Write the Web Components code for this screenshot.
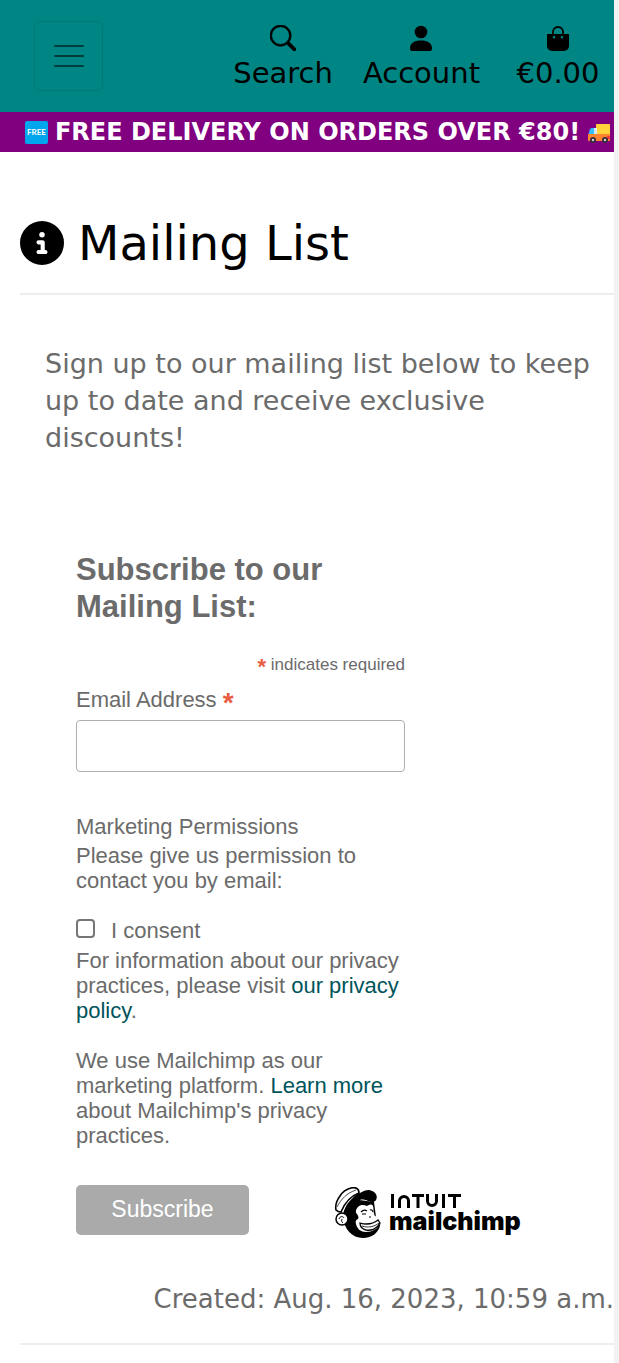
<!DOCTYPE html>
<html lang="en">
<head>
<meta charset="utf-8">
<meta name="viewport" content="width=device-width, initial-scale=1">
<title>Mailing List</title>
<style>
  body { margin: 0; background: #f1f3f2; font-family: "DejaVu Sans", Verdana, sans-serif; color: #6b6b6b; }
</style>
</head>
<body>
<shop-page>
  <shop-header slot="header">
    <nav-item href="#search" label="Search"><svg slot="icon" width="26" height="26" viewBox="0 0 16 16"><path d="M11.742 10.344a6.5 6.5 0 1 0-1.397 1.398h-.001c.03.04.062.078.098.115l3.85 3.85a1 1 0 0 0 1.415-1.414l-3.85-3.85a1.007 1.007 0 0 0-.115-.1zM12 6.5a5.5 5.5 0 1 1-11 0 5.5 5.5 0 0 1 11 0z" stroke="#000" stroke-width=".5"/></svg></nav-item>
    <nav-item href="#account" label="Account"><svg slot="icon" width="26" height="26" viewBox="0 0 26 26"><circle cx="13" cy="7" r="6.300"/><path d="M2 23.500C2 18 6.500 15.500 13 15.500s11 2.500 11 8c0 1.500-.5 2.500-2 2.500H4c-1.500 0-2-1-2-2.500z"/></svg></nav-item>
    <nav-item href="#bag" label="€0.00"><svg slot="icon" width="26" height="26" viewBox="0 0 26 26"><path d="M8 11V7a5 5 0 0 1 10 0v4" fill="none" stroke="#000" stroke-width="1.800"/><path fill-rule="evenodd" d="M2 9h22v12a5 5 0 0 1-5 5H7a5 5 0 0 1-5-5zM7.700 12.300a1.300 1.300 0 1 0 2.600 0 1.300 1.300 0 1 0-2.600 0zM15.700 12.300a1.300 1.300 0 1 0 2.600 0 1.300 1.300 0 1 0-2.600 0z"/></svg></nav-item>
  </shop-header>
  <promo-banner slot="header">FREE DELIVERY ON ORDERS OVER €80!</promo-banner>
  <page-title>Mailing List</page-title>
  <intro-text>Sign up to our mailing list below to keep up to date and receive exclusive discounts!</intro-text>
  <subscribe-form></subscribe-form>
  <created-note>Created: Aug. 16, 2023, 10:59 a.m.</created-note>
</shop-page>

<script>
const define = (name, html) => {
  const template = document.createElement('template');
  template.innerHTML = '<style>:host{display:block;box-sizing:border-box}*{box-sizing:border-box}</style>' + html;
  customElements.define(name, class extends HTMLElement {
    constructor() {
      super();
      this.attachShadow({ mode: 'open' }).append(template.content.cloneNode(true));
    }
    connectedCallback() {
      const link = this.shadowRoot.querySelector('[data-link]');
      if (link) {
        link.href = this.getAttribute('href');
        link.querySelector('span').textContent = this.getAttribute('label');
      }
    }
  });
};

define('shop-page', `
<style>
  :host { margin-right: 5px; background: #fff; overflow: hidden; min-height: 100vh; }
  main { padding: 64px 0 17px 20px; }
</style>
<slot name="header"></slot>
<main><slot></slot></main>`);

define('shop-header', `
<style>
  :host { background: #008585; height: 112px; padding: 21px 8px 0 34px; display: flex; justify-content: space-between; align-items: flex-start; }
  button { width: 69px; height: 70px; border: 1px solid #007878; border-radius: 6px; background: none; padding: 0; display: grid; place-items: center; }
  nav { display: flex; gap: 30px; padding-top: 4px; }
</style>
<button type="button" aria-label="Menu"><svg width="30" height="24" viewBox="0 0 30 24" stroke="#003c3c" stroke-width="2" stroke-linecap="round"><path d="M1 2h28M1 12h28M1 22h28"/></svg></button>
<nav><slot></slot></nav>`);

define('nav-item', `
<style>
  :host { min-width: 96px; }
  a { display: flex; flex-direction: column; align-items: center; gap: 4px; color: #000; text-decoration: none; font-size: 29px; line-height: 36px; }
  ::slotted(svg) { display: block; }
</style>
<a data-link><slot name="icon"></slot><span></span></a>`);

define('promo-banner', `
<style>
  :host { display: flex; align-items: center; justify-content: space-between; height: 40px; padding: 0 3px 0 25px; background: #800080; color: #fff; font-size: 24px; line-height: 40px; font-weight: bold; white-space: nowrap; }
  svg { flex: none; }
</style>
<svg width="23" height="23" viewBox="0 0 23 23" role="img" aria-label="Free"><rect width="23" height="23" rx="2" fill="#00a6ed"/><text x="11.500" y="14" text-anchor="middle" font-family="Lato, sans-serif" font-size="8" font-weight="bold" fill="#fff">FREE</text></svg>
<span><slot></slot></span>
<svg width="24" height="23" viewBox="0 0 24 23" role="img" aria-label="Delivery truck"><rect x="9" y="3" width="14" height="14" rx="1" fill="#ffd43a"/><path d="M3 8q1-1 2-1h5v8H1z" fill="#32bfff"/><path d="M7 7h3v8H7z" fill="#d8e9f3"/><path d="M1 13h22v6q0 1-1 1H2q-1 0-1-1z" fill="#ff8430"/><path d="M20 15h3v3h-3z" fill="#f43b3b"/><g fill="#382b38"><circle cx="6" cy="19" r="3"/><circle cx="18" cy="19" r="3"/></g><g fill="#d5d1d5"><circle cx="6" cy="19" r="1.200"/><circle cx="18" cy="19" r="1.200"/></g></svg>`);

define('page-title', `
<style>
  h1 { display: flex; align-items: center; gap: 14px; margin: 0; padding-bottom: 23px; border-bottom: 2px solid #eee; color: #000; font-size: 48px; line-height: 54px; font-weight: normal; }
</style>
<h1><svg width="44" height="44" viewBox="0 0 512 512" aria-hidden="true"><path d="M256 512A256 256 0 1 0 256 0a256 256 0 1 0 0 512zM216 336h24V272H216c-13.300 0-24-10.700-24-24s10.700-24 24-24h48c13.300 0 24 10.700 24 24v88h8c13.300 0 24 10.700 24 24s-10.700 24-24 24H216c-13.300 0-24-10.700-24-24s10.700-24 24-24zm40-208a32 32 0 1 1 0 64 32 32 0 1 1 0-64z"/></svg><span><slot></slot></span></h1>`);

define('intro-text', `
<style>
  :host { padding: 50px 10px 0 25px; }
  p { margin: 0; font-size: 27px; line-height: 37px; }
</style>
<p><slot></slot></p>`);

define('mailchimp-logo', `
<style>
  :host { flex: none; }
  a { display: flex; color: #000; text-decoration: none; }
  svg { display: block; }
</style>
<a href="#mailchimp" aria-label="Intuit Mailchimp"><svg width="190" height="52" viewBox="0 0 190 52">
  <path d="M18 12C12 17 9 24 9 30c1 12 9 21 20 21 9 0 15-5 17-12 1-4-1-7-4-9l-2-15z"/>
  <path d="M24 20c3-3 6-2 9-1 3-2 5-2 6 0 1 3 0 7 2 10 4 1 6 4 5 7-2 6-8 9-14 9-5 0-9-3-10-8-1-3 0-4 2-5 1-2 0-3-1-5-2-2-1-5 1-7z" fill="#fff"/>
  <path d="M2 23C1 18 3 13 6 9 9 4 13 2 17 1c4-1 8 0 8 5C17 9 11 15 7 25c-2 0-4-1-5-2z" fill="#fff" stroke="#000" stroke-width="1.600"/>
  <path d="M3 20C7 12 13 6 22 3" fill="none" stroke="#000" stroke-width=".7"/>
  <path d="M17 13c3-4 6-6 9-7 5-3 9-4 12-2 4 1 6 6 4 9-2 3-5 2-8 1-4-2-7-2-11 0-3 2-6 3-9 3z"/>
  <circle cx="8" cy="32" r="6" fill="#fff" stroke="#000" stroke-width="1.500"/>
  <path d="M5 32c1-3 4-3 5-1M8 32c-1 2 0 3 1 4" fill="none" stroke="#000" stroke-width="1"/>
  <path d="M27 25q3-3 6-1M28 27h4M36 23q2-1 3 2M35 30l2 0" fill="none" stroke="#000" stroke-width="1.200"/>
  <path d="M26 36c7 2 13 1 18-3l2 3c-3 6-9 8-14 7-4-1-6-3-6-7z" fill="#fff" stroke="#000" stroke-width="1.300"/>
  <path d="M28 39c6 2 12 1 17-3" fill="none" stroke="#000" stroke-width=".8"/>
  <g fill="none" stroke="#000" stroke-width="3"><path d="M58.500 7v14M65.500 21v-7a4 4 0 0 1 9 0v7M78 8.500h12M84 8v13M93.500 7v7a4.500 4.500 0 0 0 9 0V7M109.500 7v14M114 8.500h13M120.500 8v13"/></g>
  <text x="55" y="43" font-family="Inter, sans-serif" font-size="25" font-weight="900">mailchimp</text>
</svg></a>`);

define('subscribe-form', `
<style>
  :host { margin: 95px 0 0 56px; font-family: "Liberation Sans", Arial, sans-serif; font-size: 22px; line-height: 25px; }
  .fields { max-width: 329px; }
  h2 { margin: 0 0 30px; font-size: 31px; line-height: 37px; }
  .required { font-size: 17px; line-height: 20px; text-align: right; margin-bottom: 8px; }
  .star { color: #e85c41; font-weight: bold; }
  .required .star { font-size: 22px; line-height: 20px; vertical-align: -4px; }
  label .star { font-size: 28px; line-height: 20px; vertical-align: -5px; }
  .email { display: block; line-height: 29px; }
  input[type=email] { display: block; width: 100%; height: 52px; margin: 6px 0 42px; border: 1px solid #abb0b2; border-radius: 4px; background: #fff; padding: 0 8px; font: inherit; }
  p { margin: 0 0 25px; }
  .title { margin: 0 0 4px; }
  .consent { display: flex; align-items: center; gap: 16px; margin-bottom: 5px; }
  input[type=checkbox] { appearance: none; width: 19px; height: 19px; margin: 0 0 4px; border: 2px solid #767676; border-radius: 4px; background: #fff; }
  input[type=checkbox]:checked { background: #767676; }
  a { color: #00545a; text-decoration: none; }
  .actions { display: flex; align-items: center; gap: 85px; padding-top: 8px; }
  button { width: 173px; height: 50px; border: 0; border-radius: 5px; background: #aaa; color: #fff; font: 23px/48px "Liberation Sans", Arial, sans-serif; padding: 0 0 2px; }
  mailchimp-logo { padding-top: 6px; }
</style>
<form>
  <div class="fields">
    <h2>Subscribe to our Mailing List:</h2>
    <div class="required"><span class="star">*</span> indicates required</div>
    <label class="email" for="email">Email Address <span class="star">*</span></label>
    <input type="email" id="email" required>
    <p class="title">Marketing Permissions</p>
    <p>Please give us permission to contact you by email:</p>
    <label class="consent"><input type="checkbox"><span>I consent</span></label>
    <p>For information about our privacy practices, please visit <a href="#privacy">our privacy policy</a>.</p>
    <p>We use Mailchimp as our marketing platform. <a href="#learn">Learn more</a> about Mailchimp's privacy practices.</p>
  </div>
  <div class="actions"><button type="submit">Subscribe</button><mailchimp-logo></mailchimp-logo></div>
</form>`);

define('created-note', `
<style>
  :host { padding: 42px 0 25px; border-bottom: 2px solid #eee; font-size: 26px; line-height: 37px; text-align: right; }
</style>
<slot></slot>`);
</script>
</body>
</html>
